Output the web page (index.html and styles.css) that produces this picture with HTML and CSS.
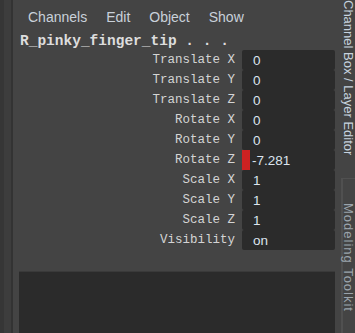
FILE: index.html
```html
<!DOCTYPE html>
<html lang="en">
<head>
  <meta charset="UTF-8">
  <title>Channel Box</title>
  <link rel="stylesheet" href="styles.css">
</head>
<body>
  <div class="window">
    <div class="side-left">
      <div class="side-a"></div>
      <div class="side-b"></div>
      <div class="side-line"></div>
    </div>

    <div class="main">
      <div class="menu">
        <span class="menu-item">Channels</span>
        <span class="menu-item">Edit</span>
        <span class="menu-item">Object</span>
        <span class="menu-item">Show</span>
      </div>

      <div class="node-name">R_pinky_finger_tip . . .</div>

      <div class="channels">
        <div class="row"><span class="label">Translate X</span><span class="field">0</span></div>
        <div class="row"><span class="label">Translate Y</span><span class="field">0</span></div>
        <div class="row"><span class="label">Translate Z</span><span class="field">0</span></div>
        <div class="row"><span class="label">Rotate X</span><span class="field">0</span></div>
        <div class="row"><span class="label">Rotate Y</span><span class="field">0</span></div>
        <div class="row"><span class="label">Rotate Z</span><span class="field keyed"><i class="key"></i>-7.281</span></div>
        <div class="row"><span class="label">Scale X</span><span class="field">1</span></div>
        <div class="row"><span class="label">Scale Y</span><span class="field">1</span></div>
        <div class="row"><span class="label">Scale Z</span><span class="field">1</span></div>
        <div class="row"><span class="label">Visibility</span><span class="field">on</span></div>
      </div>

      <div class="layers"></div>
    </div>

    <div class="tabs">
      <div class="tab active">Channel Box / Layer Editor</div>
      <div class="tab other">Modeling Toolkit</div>
    </div>
  </div>
</body>
</html>
```

FILE: styles.css
```css
html, body {
  margin: 0;
  padding: 0;
}
body {
  width: 355px;
  height: 333px;
  overflow: hidden;
  background-color: #444444;
  font-family: "Liberation Sans", Arial, sans-serif;
}
.window {
  display: flex;
  height: 333px;
}
.side-left {
  display: flex;
  width: 13px;
}
.side-a {
  width: 4px;
  background-color: #363636;
}
.side-b {
  width: 7px;
  background-color: #3d3d3d;
}
.side-line {
  width: 2px;
  background-color: #333333;
}
.main {
  flex: 1;
  display: flex;
  flex-direction: column;
}
.menu {
  display: flex;
  gap: 19px;
  height: 33px;
  align-items: center;
  padding-left: 15px;
  padding-top: 1px;
  box-sizing: border-box;
  font-size: 14px;
  color: #c9d1da;
}
.node-name {
  height: 17px;
  padding-left: 7px;
  font-family: "Liberation Mono", monospace;
  font-weight: bold;
  font-size: 14.5px;
  line-height: 17px;
  color: #dddddd;
}
.channels {
  display: flex;
  flex-direction: column;
  gap: 2px;
}
.row {
  display: grid;
  grid-template-columns: 222px 93px;
  column-gap: 7px;
  height: 18px;
}
.label {
  text-align: right;
  font-family: "Liberation Mono", monospace;
  font-size: 12.5px;
  line-height: 20px;
  color: #d4d4d4;
}
.field {
  display: flex;
  align-items: center;
  background-color: #2b2b2b;
  border-radius: 2px;
  padding-left: 11px;
  font-size: 13.5px;
  color: #dbe4ee;
}
.field.keyed {
  padding-left: 0;
}
.key {
  width: 8px;
  height: 100%;
  margin-right: 2px;
  background-color: #cc2222;
}
.layers {
  margin: 23px 6px 0 6px;
  flex: 1;
  background-color: #2b2b2b;
  border-top: 1px solid #3a3a3a;
}
.tabs {
  width: 14px;
  display: flex;
  flex-direction: column;
}
.tab {
  writing-mode: vertical-rl;
  font-size: 13px;
  line-height: 14px;
  white-space: nowrap;
}
.tab.active {
  height: 178px;
  color: #c6d2de;
}
.tab.other {
  flex: 1;
  border-left: 2px solid #505050;
  border-top: 1px solid #505050;
  padding-top: 24px;
  color: #9aa3ab;
  letter-spacing: 1px;
}
```
